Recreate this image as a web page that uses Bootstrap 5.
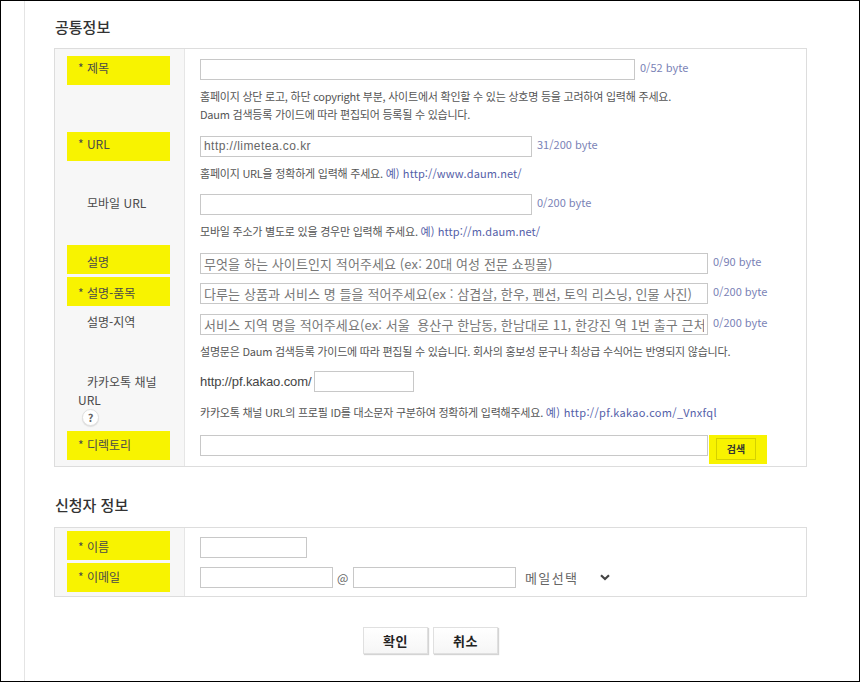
<!DOCTYPE html>
<html lang="ko">
<head>
<meta charset="utf-8">
<title>공통정보</title>
<link rel="stylesheet" href="https://cdn.jsdelivr.net/npm/bootstrap@5.3.0/dist/css/bootstrap.min.css">
<style>
html,body{margin:0;background:#fff;}
body{font-family:"Noto Sans CJK KR","Liberation Sans",sans-serif;font-size:12px;line-height:18px;color:#4a4a4a;}
.frame{height:682px;border:1px solid #000;padding-left:23px;overflow:hidden;}
.sheet{height:100%;border-left:1px solid #e4e4e4;padding-left:29px;width:782px;}
.sec-title{font-size:15px;line-height:20px;font-weight:500;color:#333;margin:0;padding-left:1px;}
.t1{padding-top:16px;height:47px;}
.t2{padding-top:28px;height:60px;}
.fpanel{border:1px solid #ddd;width:753px;}
.frow{display:grid;grid-template-columns:130px 1fr;}
.flabel{background:#f7f7f7;border-right:1px solid #e6e6e6;padding-left:12px;}
.lbox{width:103px;height:29px;padding:3px 0 0 11px;}
.lbox.noast{text-indent:9px;}
.hl{background:#f8f300;}
.lp4{padding-top:4px}.lp5{padding-top:5px}.lp6{padding-top:6px}.lp7{padding-top:7px}.lp8{padding-top:8px}
.fbody{padding-left:15px;}
.form-control.fld{height:21px;min-height:0;border:1px solid #c8c8c8;border-radius:0;padding:0 3px;font-size:13px;line-height:19px;letter-spacing:.1px;color:#666;box-shadow:none;font-family:inherit;}
.form-control.fld::placeholder{color:#777;opacity:1;}
.form-control.urlval{font-family:"Liberation Sans",sans-serif;font-size:12px;letter-spacing:.45px;}
.w435{width:435px}.w332{width:332px}.w508{width:508px}.w100{width:100px}.w107{width:107px}.w133{width:133px}.w163{width:163px}
.bytes{color:#7a82b6;margin:0 0 4px 5px;white-space:nowrap;font-size:11px;}
.hint{margin:7px 0 0;color:#555;font-size:11px;letter-spacing:-.23px;white-space:nowrap;}
.hint a{color:#5460a8;text-decoration:none;letter-spacing:.1px;}
.hint-k{margin-top:11px;}
.hint-k a{letter-spacing:.3px;}
.pre{font-family:"Liberation Sans",sans-serif;font-size:13px;letter-spacing:-.1px;margin-right:3px;color:#444;}
.qmark{display:inline-block;vertical-align:top;width:17px;height:17px;border-radius:50%;border:1px solid #e0e0e0;background:#fff;text-align:center;text-indent:0;line-height:15px;font-size:11px;font-weight:700;margin-left:4px;color:#666;box-shadow:0 1px 1px #ddd;}
.gold{background:#f8f300;width:58px;height:29px;margin-left:1px;padding:3px 0 0 7px;}
.btn.find{width:40px;height:22px;padding:0;font-size:10px;font-weight:700;line-height:20px;border:1px solid #d5d100;border-radius:0;background:#f8f300;color:#333;}
.at{margin:0 5px 0 4px;width:11px;font-size:12px;color:#666;}
.form-select.mailpick{width:100px;height:21px;border:0;padding:0 0 0 5px;margin-left:4px;font-size:13px;line-height:19px;letter-spacing:1.4px;color:#666;background-color:#fff;background-image:url("data:image/svg+xml,%3csvg xmlns='http://www.w3.org/2000/svg' viewBox='0 0 10 7'%3e%3cpath fill='none' stroke='%23444' stroke-width='2.2' d='M1 1.2l4 3.8 4-3.8'/%3e%3c/svg%3e");background-size:10px 7px;background-position:right 10px center;box-shadow:none;font-family:inherit;}
.acts{margin-top:30px;padding-left:309px;gap:5px;}
.btn.act{width:65px;height:27px;padding:0;font-size:13px;font-weight:700;line-height:25px;color:#222;background:#fff;background-image:linear-gradient(#fff,#f6f6f6);border:1px solid #e0e0e0;border-radius:0;box-shadow:1px 1px 1px #d4d4d4;letter-spacing:.5px;}
.p7{padding-top:7px}.p9{padding-top:9px}.p5{padding-top:5px}.p4{padding-top:4px}.p6{padding-top:6px}.p3{padding-top:3px}
.rh1{height:79px}.rh2{height:58px}.rh3{height:59px}.rh4{height:32px}.rh6{height:56px}.rh7{height:66px}.rh8{height:35px}.rh9{height:33px}.rh10{height:35px}
</style>
</head>
<body>
<div class="frame">
<div class="sheet">
  <div class="t1"><h2 class="sec-title">공통정보</h2></div>
  <div class="fpanel">
    <div class="frow rh1">
      <div class="flabel p7"><div class="lbox hl">* 제목</div></div>
      <div class="fbody p9">
        <div class="d-flex align-items-center"><input class="form-control fld w435" type="text"><span class="bytes">0/52 byte</span></div>
        <p class="hint">홈페이지 상단 로고, 하단 copyright 부분, 사이트에서 확인할 수 있는 상호명 등을 고려하여 입력해 주세요.<br>Daum 검색등록 가이드에 따라 편집되어 등록될 수 있습니다.</p>
      </div>
    </div>
    <div class="frow rh2">
      <div class="flabel p4"><div class="lbox hl">* URL</div></div>
      <div class="fbody p7">
        <div class="d-flex align-items-center"><input class="form-control fld urlval w332" type="text" value="http://limetea.co.kr"><span class="bytes">31/200 byte</span></div>
        <p class="hint">홈페이지 URL을 정확하게 입력해 주세요. <a href="#">예) http://www.daum.net/</a></p>
      </div>
    </div>
    <div class="frow rh3">
      <div class="flabel p5"><div class="lbox noast">모바일 URL</div></div>
      <div class="fbody p7">
        <div class="d-flex align-items-center"><input class="form-control fld w332" type="text"><span class="bytes">0/200 byte</span></div>
        <p class="hint">모바일 주소가 별도로 있을 경우만 입력해 주세요. <a href="#">예) http://m.daum.net/</a></p>
      </div>
    </div>
    <div class="frow rh4">
      <div class="flabel"><div class="lbox hl noast lp8">설명</div></div>
      <div class="fbody p7">
        <div class="d-flex align-items-center"><input class="form-control fld w508" type="text" placeholder="무엇을 하는 사이트인지 적어주세요 (ex: 20대 여성 전문 쇼핑몰)"><span class="bytes">0/90 byte</span></div>
      </div>
    </div>
    <div class="frow rh4">
      <div class="flabel"><div class="lbox hl lp7">* 설명-품목</div></div>
      <div class="fbody p5">
        <div class="d-flex align-items-center"><input class="form-control fld w508" type="text" placeholder="다루는 상품과 서비스 명 들을 적어주세요(ex : 삼겹살, 한우, 펜션, 토익 리스닝, 인물 사진)"><span class="bytes">0/200 byte</span></div>
      </div>
    </div>
    <div class="frow rh6">
      <div class="flabel"><div class="lbox noast lp4">설명-지역</div></div>
      <div class="fbody p4">
        <div class="d-flex align-items-center"><input class="form-control fld w508" type="text" placeholder="서비스 지역 명을 적어주세요(ex: 서울  용산구 한남동, 한남대로 11, 한강진 역 1번 출구 근처)"><span class="bytes">0/200 byte</span></div>
        <p class="hint">설명문은 Daum 검색등록 가이드에 따라 편집될 수 있습니다. 회사의 홍보성 문구나 최상급 수식어는 반영되지 않습니다.</p>
      </div>
    </div>
    <div class="frow rh7">
      <div class="flabel p5"><div class="lbox noast h-auto">카카오톡 채널 URL<br><span class="qmark">?</span></div></div>
      <div class="fbody p6">
        <div class="d-flex align-items-center"><span class="pre">http://pf.kakao.com/</span><input class="form-control fld w100" type="text"></div>
        <p class="hint hint-k">카카오톡 채널 URL의 프로필 ID를 대소문자 구분하여 정확하게 입력해주세요. <a href="#">예) http://pf.kakao.com/_Vnxfql</a></p>
      </div>
    </div>
    <div class="frow rh8">
      <div class="flabel"><div class="lbox hl lp5">* 디렉토리</div></div>
      <div class="fbody p4">
        <div class="d-flex align-items-start"><input class="form-control fld w508" type="text"><div class="gold"><button class="btn find" type="button">검색</button></div></div>
      </div>
    </div>
  </div>
  <div class="t2"><h2 class="sec-title">신청자 정보</h2></div>
  <div class="fpanel">
    <div class="frow rh10">
      <div class="flabel p3"><div class="lbox hl lp7">* 이름</div></div>
      <div class="fbody p9"><input class="form-control fld w107" type="text"></div>
    </div>
    <div class="frow rh9">
      <div class="flabel"><div class="lbox hl lp5">* 이메일</div></div>
      <div class="fbody p4">
        <div class="d-flex align-items-center"><input class="form-control fld w133" type="text"><span class="at">@</span><input class="form-control fld w163" type="text"><select class="form-select mailpick"><option>메일선택</option></select></div>
      </div>
    </div>
  </div>
  <div class="d-flex acts">
    <button class="btn act" type="button">확인</button>
    <button class="btn act" type="button">취소</button>
  </div>
</div>
</div>
<script src="https://cdn.jsdelivr.net/npm/bootstrap@5.3.0/dist/js/bootstrap.bundle.min.js"></script>
</body>
</html>
